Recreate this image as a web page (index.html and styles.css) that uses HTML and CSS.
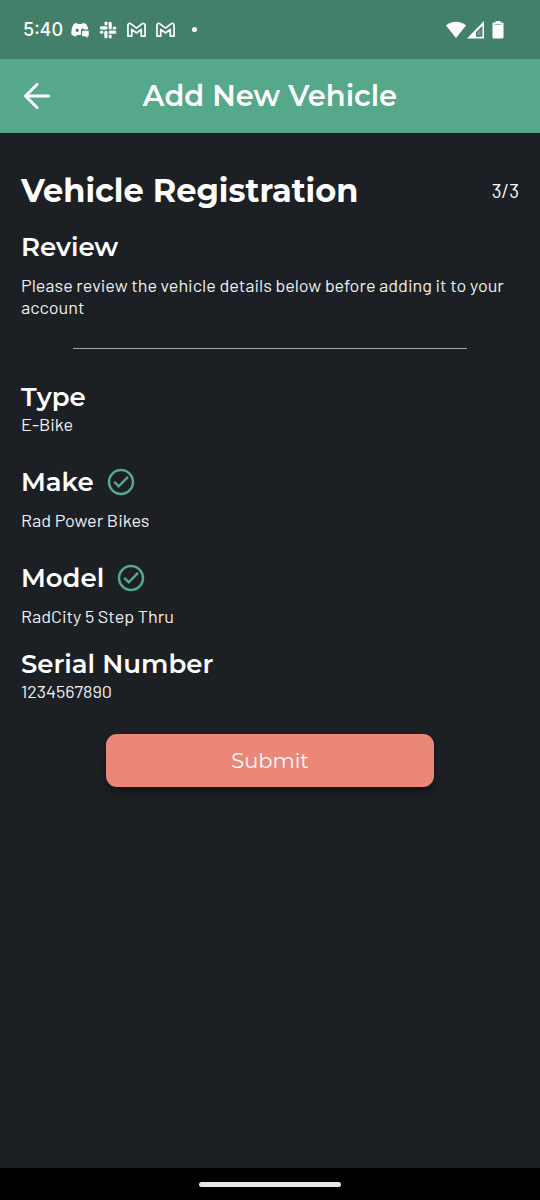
FILE: index.html
```html
<!DOCTYPE html>
<html lang="en">
<head>
<meta charset="utf-8">
<meta name="viewport" content="width=device-width, initial-scale=1">
<title>Add New Vehicle</title>
<link rel="stylesheet" href="styles.css">
</head>
<body>
<div class="status">
  <span class="time">5:40</span>
  <div class="notifications">
    <svg width="18" height="16" viewBox="0 0 18 16" aria-hidden="true"><path fill="#fff" fill-rule="evenodd" d="M5.500 1 7 2h3.500L12 1c2 .3 3 .8 3.600 1.800C16.500 4.300 17 5.800 17.300 7.600H13.200C13 6.900 12.400 6.400 11.600 6.400c-1 0-1.700.8-1.700 1.800V13H6l-1 1.500C3 14.200 1.500 13.500.3 12.300.2 8.500.9 5.500 2.300 2.700 3 1.700 4 1.200 5.500 1ZM6.200 6.500a1.600 1.800 0 1 0 0 3.600 1.600 1.800 0 0 0 0-3.600Z"/><path fill="#fff" d="M11.200 8.800h6.500v5.400h-1.200V16l-2-1.800h-3.300z"/></svg>
    <svg width="18" height="18" viewBox="0 0 18 18" fill="none" stroke="#fff" stroke-width="3.200" stroke-linecap="round" aria-hidden="true"><path d="M7 6.800H2.300M7 2.200h.1M11.200 2.300V7M15.700 7h.1M11.200 11.200h4.600M11.200 15.700v.1M6.900 11.200v4.600M2.300 11.200h.1M7 2.200v.6M15.700 7h-.5M11.200 15.800v-.6M2.300 11.200h.6"/></svg>
    <svg width="19" height="16" viewBox="0 0 20 16" fill="none" stroke="#fff" stroke-width="1.800" stroke-linejoin="round" aria-hidden="true"><path d="M1 14.500V3C1 1 3 .6 4.200 1.600L10 6l5.800-4.400C17 .6 19 1 19 3v11.500h-4V7.300l-5 3.800-5-3.800v7.200z"/></svg>
    <svg width="19" height="16" viewBox="0 0 20 16" fill="none" stroke="#fff" stroke-width="1.800" stroke-linejoin="round" aria-hidden="true"><path d="M1 14.500V3C1 1 3 .6 4.200 1.600L10 6l5.800-4.400C17 .6 19 1 19 3v11.500h-4V7.300l-5 3.800-5-3.800v7.200z"/></svg>
    <span class="more"></span>
  </div>
  <div class="system">
    <svg width="20" height="18" viewBox="0 0 20 18" fill="#fff" aria-hidden="true"><path d="M0 4.500C5.500-.4 14.500-.4 20 4.500L10 17z"/></svg>
    <svg width="17" height="18" viewBox="0 0 17 18" aria-hidden="true"><path fill="#fff" fill-rule="evenodd" d="M17 0v17.500H0zM15.400 4.800 9 11.200v4.600h6.400z"/><path fill="#fff" d="m10.600 11.600 3-3v5.600h-3z" opacity=".25"/></svg>
    <svg class="battery" width="12" height="18" viewBox="0 0 12 18" aria-hidden="true"><path fill="#fff" d="M3.500 0h5v1.500h1.700c.8 0 1.300.5 1.300 1.300v13.400c0 .8-.5 1.300-1.300 1.300H1.800c-.8 0-1.300-.5-1.300-1.300V2.800c0-.8.5-1.300 1.300-1.300h1.700z"/><path stroke="#9cbfb0" d="M2.500 3.500h7"/></svg>
  </div>
</div>
<header class="bar">
  <button class="back" type="button" aria-label="Back"><svg width="26" height="26" viewBox="0 0 26 26" fill="none" stroke="#fff" stroke-width="3" stroke-linecap="round" stroke-linejoin="round" aria-hidden="true"><path d="M24.500 13H2M13 1.500 1.500 13 13 24.500"/></svg></button>
  <h1 class="bar-title">Add New Vehicle</h1>
</header>
<main class="content">
  <div class="heading">
    <h2 class="title">Vehicle Registration</h2>
    <span class="step">3/3</span>
  </div>
  <h3 class="label">Review</h3>
  <p class="text spaced">Please review the vehicle details below before adding it to your account</p>
  <hr class="rule">
  <section class="field">
    <h3 class="label">Type</h3>
    <p class="text">E-Bike</p>
  </section>
  <section class="field">
    <h3 class="label">Make <svg width="28" height="28" viewBox="0 0 28 28" fill="none" stroke="#56a88a" stroke-width="2.500" role="img" aria-label="Verified"><circle cx="14" cy="14" r="12"/><path d="m7.200 13.800 4.500 4.500 9.300-9.500"/></svg></h3>
    <p class="text spaced">Rad Power Bikes</p>
  </section>
  <section class="field">
    <h3 class="label">Model <svg width="28" height="28" viewBox="0 0 28 28" fill="none" stroke="#56a88a" stroke-width="2.500" role="img" aria-label="Verified"><circle cx="14" cy="14" r="12"/><path d="m7.200 13.800 4.500 4.500 9.300-9.500"/></svg></h3>
    <p class="text spaced">RadCity 5 Step Thru</p>
  </section>
  <section class="field last">
    <h3 class="label">Serial Number</h3>
    <p class="text">1234567890</p>
  </section>
  <button class="submit" type="button">Submit</button>
</main>
<div class="nav"><span class="handle"></span></div>
</body>
</html>
```
FILE: styles.css
```css
* { box-sizing: border-box; }
body {
  margin: 0;
  min-height: 100vh;
  display: flex;
  flex-direction: column;
  background: #1c1f24;
  color: #fff;
  font-family: Montserrat, Inter, sans-serif;
}
h1, h2, h3, p { margin: 0; }
svg { display: block; flex: none; }
.status {
  display: flex;
  align-items: center;
  height: 59px;
  padding: 0 36px 0 23px;
  background: #428069;
}
.time {
  font: 500 18px/24px Inter, sans-serif;
}
.notifications {
  display: flex;
  align-items: center;
  gap: 10px;
  margin-left: 8px;
}
.more {
  width: 5px;
  height: 5px;
  margin-left: 7px;
  border-radius: 50%;
  background: #fff;
}
.system {
  display: flex;
  align-items: center;
  gap: 1px;
  margin-left: auto;
}
.battery { margin-left: 7px; }
.bar {
  display: grid;
  grid-template-columns: 52px 1fr 52px;
  align-items: center;
  height: 74px;
  padding: 0 24px;
  background: #56a88a;
}
.back {
  padding: 0;
  border: 0;
  background: none;
  cursor: pointer;
}
.bar-title {
  font-size: 29px;
  line-height: 40px;
  font-weight: 600;
  text-align: center;
  white-space: nowrap;
}
.content {
  flex: 1;
  padding: 36px 21px 0;
}
.heading {
  display: flex;
  align-items: center;
  justify-content: space-between;
  margin-bottom: 18px;
}
.title {
  font-size: 32px;
  line-height: 44px;
  font-weight: 700;
}
.label {
  display: flex;
  align-items: center;
  gap: 13px;
  font-size: 26px;
  line-height: 32px;
  font-weight: 600;
}
.text, .step {
  font-family: Barlow, Roboto, sans-serif;
  font-size: 18px;
  line-height: 22px;
  font-weight: 400;
}
.step { font-size: 19px; }
.text { color: #eee; }
.spaced { margin-top: 11px; }
.rule {
  width: 79%;
  height: 1px;
  margin: 30px auto 32px;
  border: 0;
  background: #a3a3ad;
}
.field { margin-bottom: 31px; }
.last {
  margin-top: -10px;
  margin-bottom: 32px;
}
.submit {
  display: block;
  width: 66%;
  height: 53px;
  margin: 0 auto;
  border: 0;
  border-radius: 11px;
  background: #eb8778;
  color: #fff;
  font: 400 21px/28px Montserrat, Inter, sans-serif;
  box-shadow: 0 6px 10px rgba(0, 0, 0, .3);
  cursor: pointer;
}
.nav {
  display: flex;
  align-items: center;
  justify-content: center;
  height: 32px;
  background: #000;
}
.handle {
  width: 142px;
  height: 5px;
  border-radius: 3px;
  background: #e8e8e8;
}
```
